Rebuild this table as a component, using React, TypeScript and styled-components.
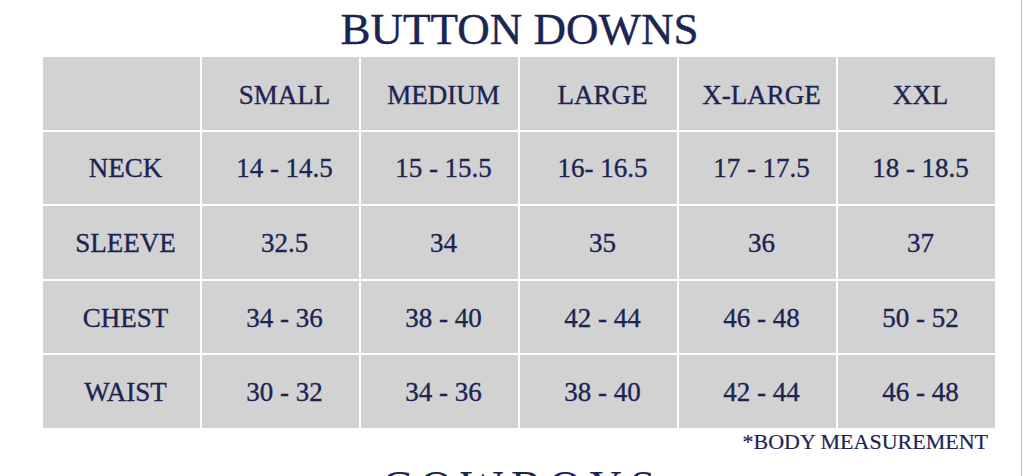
import { Fragment } from 'react';
import { createGlobalStyle, styled } from 'styled-components';

const GlobalStyle = createGlobalStyle`
  html, body {
    margin: 0;
    padding: 0;
    background: #ffffff;
  }
  body {
    font-family: 'Liberation Serif', 'Times New Roman', serif;
    color: #1c2452;
  }
`;

const Page = styled.div`
  width: 1021px;
  height: 476px;
  overflow: hidden;
  border-right: 1px solid #b9b9bb;
  display: flex;
  flex-direction: column;
`;

const Title = styled.h1`
  margin: 7px 0 0;
  font-size: 45px;
  line-height: 45px;
  font-weight: 400;
  text-align: center;
  padding-left: 18px;
  color: #1c2452;
  -webkit-text-stroke: 0.4px #1c2452;
`;

const Grid = styled.div`
  margin: 5px 0 0 43px;
  width: 952px;
  display: grid;
  grid-template-columns: repeat(6, 1fr);
  grid-auto-rows: 72.6px;
  gap: 2px;
  background: #ffffff;
`;

const Cell = styled.div<{ $top?: number }>`
  background: #d2d2d2;
  display: flex;
  align-items: center;
  justify-content: center;
  font-size: 27px;
  padding: ${(p) => p.$top ?? 2}px 0 0 8px;
  box-sizing: border-box;
  color: #1c2452;
  -webkit-text-stroke: 0.35px #1c2452;
  white-space: nowrap;
`;

const Note = styled.div`
  margin-top: 3px;
  width: 988px;
  text-align: right;
  font-size: 22px;
  line-height: 22px;
  color: #1c2452;
  -webkit-text-stroke: 0.2px #1c2452;
`;

const NextTitle = styled.div`
  margin-top: 11px;
  font-size: 45px;
  line-height: 45px;
  letter-spacing: 8px;
  text-align: center;
  padding-left: 24px;
  color: #1c2452;
`;

const sizes = ['SMALL', 'MEDIUM', 'LARGE', 'X-LARGE', 'XXL'];

const rows: { label: string; values: string[] }[] = [
  { label: 'NECK', values: ['14 - 14.5', '15 - 15.5', '16- 16.5', '17 - 17.5', '18 - 18.5'] },
  { label: 'SLEEVE', values: ['32.5', '34', '35', '36', '37'] },
  { label: 'CHEST', values: ['34 - 36', '38 - 40', '42 - 44', '46 - 48', '50 - 52'] },
  { label: 'WAIST', values: ['30 - 32', '34 - 36', '38 - 40', '42 - 44', '46 - 48'] },
];

export default function App() {
  return (
    <>
      <GlobalStyle />
      <Page>
        <Title>BUTTON DOWNS</Title>
        <Grid>
          <Cell />
          {sizes.map((s) => (
            <Cell key={s} $top={4}>
              {s}
            </Cell>
          ))}
          {rows.map((row) => (
            <Fragment key={row.label}>
              <Cell>{row.label}</Cell>
              {row.values.map((v, i) => (
                <Cell key={row.label + i}>{v}</Cell>
              ))}
            </Fragment>
          ))}
        </Grid>
        <Note>*BODY MEASUREMENT</Note>
        <NextTitle>COWBOYS</NextTitle>
      </Page>
    </>
  );
}
